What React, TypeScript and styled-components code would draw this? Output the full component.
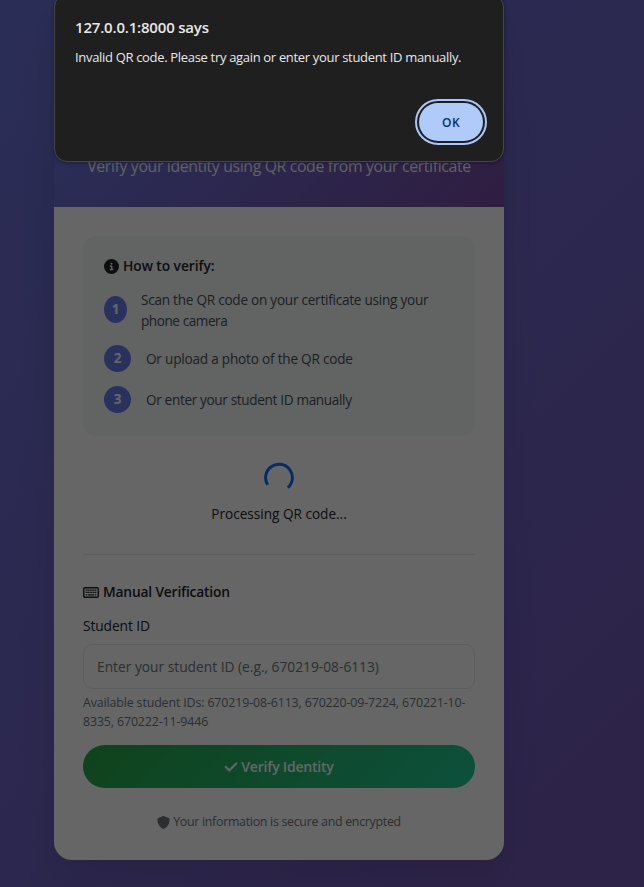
import React from 'react';
import styled, { createGlobalStyle } from 'styled-components';
import { FaCheck, FaCircleInfo, FaShield } from 'react-icons/fa6';

const GlobalStyle = createGlobalStyle`
  *, *::before, *::after { box-sizing: border-box; }
  html, body { margin: 0; height: 100%; overflow: hidden; }
  body {
    font-family: 'Open Sans', 'Noto Sans', sans-serif;
    color: #212529;
  }
  h2, p, ol { margin: 0; padding: 0; }
`;

const Page = styled.div`
  position: relative;
  height: 887px;
  padding-left: 54px;
  overflow: hidden;
  background: linear-gradient(135deg, #6a72d9, #7256b2);
`;

const Card = styled.main`
  width: 450px;
  height: 860px;
  background: #fff;
  border-radius: 0 0 18px 18px;
  overflow: hidden;
  box-shadow: 0 18px 36px rgba(0, 0, 0, 0.1);
`;

const Header = styled.header`
  height: 207px;
  padding-bottom: 29px;
  display: flex;
  align-items: flex-end;
  justify-content: center;
  background: linear-gradient(135deg, #667eea, #764ba2);
`;

const Subtitle = styled.p`
  font-size: 15.8px;
  line-height: 24px;
  letter-spacing: -0.345px;
  color: rgba(255, 255, 255, 0.95);
  white-space: nowrap;
`;

const Body = styled.div`
  padding: 29px 29px 0;
  display: flex;
  flex-direction: column;
`;

const Instructions = styled.section`
  height: 200px;
  padding: 21px;
  border-radius: 13px;
  background: #f5f9f7;
`;

const Heading = styled.h2<{ $spacing: number }>`
  display: flex;
  align-items: center;
  gap: 4px;
  height: 18px;
  font-size: 13.8px;
  font-weight: 600;
  line-height: 18px;
  letter-spacing: ${(p) => p.$spacing}px;
  white-space: nowrap;
`;

const Steps = styled.ol`
  list-style: none;
  margin-top: 14px;
  display: flex;
  flex-direction: column;
  gap: 14px;
`;

const Step = styled.li`
  display: flex;
  align-items: center;
  gap: 15px;
`;

const StepNumber = styled.span<{ $narrow?: boolean }>`
  flex: none;
  width: ${(p) => (p.$narrow ? 23 : 27)}px;
  height: 27px;
  margin-bottom: ${(p) => (p.$narrow ? 1 : 0)}px;
  border-radius: 50%;
  background: #667eea;
  color: #fff;
  display: grid;
  place-items: center;
  font-size: 13.5px;
  font-weight: 700;
  line-height: 27px;
`;

const StepText = styled.span<{ $spacing: number }>`
  font-size: 13.6px;
  line-height: 21px;
  letter-spacing: ${(p) => p.$spacing}px;
  color: #495057;
  white-space: nowrap;
`;

const StepLine = styled.span<{ $spacing: number }>`
  display: block;
  margin-left: -1px;
  letter-spacing: ${(p) => p.$spacing}px;
`;

const Processing = styled.section`
  display: flex;
  flex-direction: column;
  align-items: center;
  padding-top: 26px;
  height: 119px;
  border-bottom: 1px solid #e6e9ec;
`;

const ProcessingText = styled.p`
  margin-top: 11px;
  font-size: 13.6px;
  line-height: 22px;
`;

const ManualForm = styled.form`
  display: flex;
  flex-direction: column;
  padding-top: 28px;
`;

const Label = styled.label`
  margin-top: 14px;
  font-size: 13.8px;
  line-height: 22px;
  letter-spacing: -0.107px;
`;

const Input = styled.input`
  margin-top: 7px;
  height: 45px;
  width: 100%;
  padding: 0 13px;
  border: 1px solid #e6e9ec;
  border-radius: 9px;
  background: #fff;
  font: 400 13.8px/22px 'Open Sans', 'Noto Sans', sans-serif;
  letter-spacing: -0.02px;
  outline: none;
  &::placeholder { color: #6c757d; opacity: 1; }
`;

const Hint = styled.p`
  margin-top: 4px;
  font-size: 12.4px;
  line-height: 19px;
  letter-spacing: -0.132px;
  color: #6c757d;
  white-space: nowrap;
`;

const VerifyButton = styled.button`
  margin-top: 14px;
  height: 43px;
  border: 0;
  border-radius: 22px;
  display: flex;
  align-items: center;
  justify-content: center;
  gap: 3px;
  background: linear-gradient(135deg, #28a745, #20c997);
  color: #fff;
  font: 600 14px/22px 'Open Sans', 'Noto Sans', sans-serif;
  letter-spacing: -0.203px;
  padding-top: 2px;

  svg path {
    stroke: currentColor;
    stroke-width: 24px;
  }
`;

const Security = styled.p`
  margin-top: 24px;
  display: flex;
  align-items: center;
  justify-content: center;
  gap: 3px;
  font-size: 12.4px;
  line-height: 20px;
  letter-spacing: -0.29px;
  color: #6c757d;
`;

const Overlay = styled.div`
  position: absolute;
  inset: 0;
  background: rgba(0, 0, 0, 0.6);
`;

const Dialog = styled.div`
  position: absolute;
  top: -6px;
  left: 54px;
  width: 450px;
  height: 168px;
  padding: 21px 20px 20px;
  display: flex;
  flex-direction: column;
  border: 1px solid #454746;
  border-radius: 13px;
  background: #1f1f1f;
  color: #e8e8e8;
  box-shadow: 0 1px 4px rgba(0, 0, 0, 0.35);
`;

const DialogTitle = styled.h2`
  font-size: 15px;
  font-weight: 600;
  line-height: 22px;
  letter-spacing: -0.191px;
`;

const DialogMessage = styled.p`
  margin-top: 9px;
  font-size: 13px;
  line-height: 20px;
  letter-spacing: -0.322px;
  white-space: nowrap;
`;

const OkButton = styled.button`
  margin-top: auto;
  align-self: flex-end;
  width: 64px;
  height: 38px;
  border: 0;
  border-radius: 19px;
  outline: 2px solid #a8c7fa;
  outline-offset: 2px;
  background: #aecbf9;
  color: #062e6f;
  font: 600 12px/18px 'Open Sans', 'Noto Sans', sans-serif;
  letter-spacing: 0.4px;
  padding: 2px 0 0;
`;

const Spinner = () => (
  <svg width="30" height="30" viewBox="0 0 30 30" fill="none">
    <path d="M3.7 22.8A13.4 13.4 0 1 1 23.8 25.7" stroke="#0d6efd" strokeWidth="3" />
  </svg>
);

const KeyboardIcon = () => (
  <svg width="16" height="11" viewBox="0 0 16 11" fill="none" stroke="currentColor">
    <rect x="0.7" y="0.7" width="14.6" height="9.6" rx="1.2" strokeWidth="1.4" />
    <path d="M2.6 3.2h10.8M2.6 5.4h10.8" strokeWidth="1.3" strokeDasharray="1.5 0.36" />
    <path d="M2.6 7.8h1.5M4.8 7.8h6.4M11.9 7.8h1.5" strokeWidth="1.3" />
  </svg>
);

export default function App() {
  return (
    <>
      <GlobalStyle />
      <Page>
        <Card>
          <Header>
            <Subtitle>Verify your identity using QR code from your certificate</Subtitle>
          </Header>
          <Body>
            <Instructions>
              <Heading $spacing={-0.066}>
                <FaCircleInfo size={15} />
                How to verify:
              </Heading>
              <Steps>
                <Step>
                  <StepNumber $narrow>1</StepNumber>
                  <StepText $spacing={-0.256}>
                    <StepLine $spacing={-0.256}>Scan the QR code on your certificate using your</StepLine>
                    <StepLine $spacing={-0.45}>phone camera</StepLine>
                  </StepText>
                </Step>
                <Step>
                  <StepNumber>2</StepNumber>
                  <StepText $spacing={-0.212}>Or upload a photo of the QR code</StepText>
                </Step>
                <Step>
                  <StepNumber>3</StepNumber>
                  <StepText $spacing={-0.349}>Or enter your student ID manually</StepText>
                </Step>
              </Steps>
            </Instructions>
            <Processing>
              <Spinner />
              <ProcessingText>Processing QR code...</ProcessingText>
            </Processing>
            <ManualForm onSubmit={(e) => e.preventDefault()}>
              <Heading $spacing={-0.178}>
                <KeyboardIcon />
                Manual Verification
              </Heading>
              <Label htmlFor="student-id">Student ID</Label>
              <Input id="student-id" placeholder="Enter your student ID (e.g., 670219-08-6113)" />
              <Hint>
                Available student IDs: 670219-08-6113, 670220-09-7224, 670221-10-
                <br />
                8335, 670222-11-9446
              </Hint>
              <VerifyButton type="submit">
                <FaCheck size={14} />
                Verify Identity
              </VerifyButton>
            </ManualForm>
            <Security>
              <FaShield size={13} />
              Your information is secure and encrypted
            </Security>
          </Body>
        </Card>
        <Overlay />
        <Dialog role="alertdialog">
          <DialogTitle>127.0.0.1:8000 says</DialogTitle>
          <DialogMessage>Invalid QR code. Please try again or enter your student ID manually.</DialogMessage>
          <OkButton>OK</OkButton>
        </Dialog>
      </Page>
    </>
  );
}
